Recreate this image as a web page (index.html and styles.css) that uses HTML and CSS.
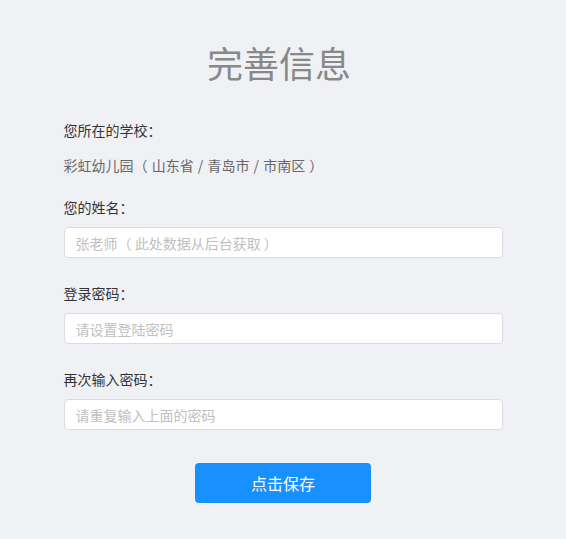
FILE: index.html
```html
<!DOCTYPE html>
<html lang="zh-CN">
<head>
    <meta charset="UTF-8">
    <meta name="viewport" content="width=device-width, initial-scale=1.0">
    <title>完善信息</title>
    <link rel="stylesheet" href="styles.css">
</head>
<body>
    <div class="page">
        <h1>完善信息</h1>
        <form class="info-form">
            <div class="group">
                <p class="label">您所在的学校<span class="colon">：</span></p>
                <p class="school">彩虹幼儿园（ 山东省 / 青岛市 / 市南区 ）</p>
            </div>

            <div class="group">
                <p class="label">您的姓名<span class="colon">：</span></p>
                <input type="text" class="field" placeholder="张老师（ 此处数据从后台获取 ）">
            </div>

            <div class="group">
                <p class="label">登录密码<span class="colon">：</span></p>
                <input type="password" class="field" placeholder="请设置登陆密码">
            </div>

            <div class="group">
                <p class="label">再次输入密码<span class="colon">：</span></p>
                <input type="password" class="field" placeholder="请重复输入上面的密码">
            </div>

            <div class="actions">
                <button type="button" class="save-btn">点击保存</button>
            </div>
        </form>
    </div>
</body>
</html>
```

FILE: styles.css
```css
body {
    margin: 0;
    background-color: #f0f1f5;
    font-family: "Noto Sans CJK SC", "Noto Sans", sans-serif;
    color: #333;
    text-spacing-trim: space-all;
    font-feature-settings: "chws" 0, "halt" 0, "palt" 0;
}

.page {
    padding-top: 37px;
}

h1 {
    margin: 0;
    padding-right: 8px;
    text-align: center;
    font-size: 36px;
    line-height: 50px;
    font-weight: normal;
    color: #888;
}

.info-form {
    width: 439px;
    margin: 33px auto 0;
    display: flex;
    flex-direction: column;
    gap: 25px;
}

.group {
    display: flex;
    flex-direction: column;
}

.label {
    margin: 0;
    font-size: 14px;
    line-height: 20px;
    color: #333;
}

/* centred full-width colon */
.colon {
    font-family: "Noto Sans CJK TC", sans-serif;
}

.school {
    margin: 15px 0 -3px;
    font-size: 14px;
    line-height: 20px;
    color: #666;
    word-spacing: 1px;
}

.field {
    margin-top: 10px;
    height: 31px;
    box-sizing: border-box;
    padding: 0 11px;
    border: 1px solid #dcdcdf;
    border-radius: 4px;
    background-color: #fff;
    font-family: inherit;
    font-size: 14px;
    color: #333;
    outline: none;
    text-spacing-trim: space-all;
    font-feature-settings: "chws" 0, "halt" 0, "palt" 0;
}

.field::placeholder {
    color: #c0c0c0;
}

.actions {
    display: flex;
    justify-content: center;
    margin-top: 8px;
}

.save-btn {
    width: 176px;
    height: 40px;
    border: none;
    border-radius: 4px;
    background-color: #1890ff;
    color: #fff;
    font-family: inherit;
    font-size: 16px;
    cursor: pointer;
}
```
